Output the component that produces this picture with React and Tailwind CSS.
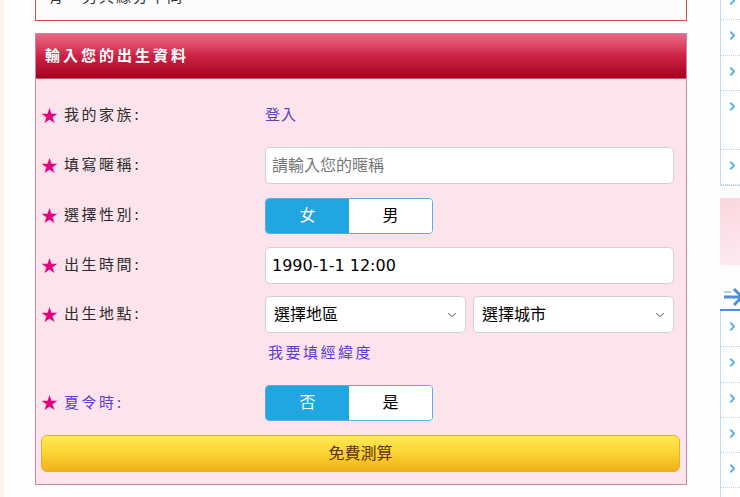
import { ChevronDown, ChevronRight } from 'lucide-react';

const font = { fontFamily: '"DejaVu Sans", "Noto Sans CJK TC", sans-serif' };

function Star() {
  return (
    <span className="-mt-[3px] w-[23px] shrink-0 font-['Noto_Sans_CJK_TC',sans-serif] text-[17px] leading-none text-[#e5007f]">★</span>
  );
}

function Label({ text, purple }) {
  return (
    <div className="flex w-[224px] shrink-0 items-center">
      <Star />
      <span className={`text-[15px] tracking-[2.5px] ${purple ? 'text-[#5a3fcb]' : 'text-[#2b2b2b]'}`}>{text}:</span>
    </div>
  );
}

function Toggle({ left, right }) {
  return (
    <div className="flex h-[36px] w-[168px] overflow-hidden rounded-[4px] border border-[#5aaedf] text-[16px]">
      <div className="flex w-[83px] items-center justify-center bg-[#22a6e2] text-white">{left}</div>
      <div className="flex flex-1 items-center justify-center bg-white text-black">{right}</div>
    </div>
  );
}

function Select({ text }) {
  return (
    <div className="flex h-[37px] flex-1 items-center justify-between rounded-[5px] border border-[#d2d2d2] bg-white pl-[8px] pr-[6px] text-[16px] text-black">
      <span>{text}</span>
      <ChevronDown size={14} strokeWidth={1.5} className="text-[#333]" />
    </div>
  );
}

function SideList({ rows }) {
  return (
    <div className="border-l border-b border-[#c4dcf2] bg-white">
      {rows.map((h, i) => (
        <div key={i} className="flex border-b border-dotted border-[#c9cfd6] pl-[5px] pt-[9px]" style={{ height: h }}>
          <ChevronRight size={13} strokeWidth={3.5} className="text-[#5bb2e8]" />
        </div>
      ))}
    </div>
  );
}

export default function App() {
  return (
    <div className="flex h-[497px] w-[740px] overflow-hidden bg-[#fdfdfd]" style={font}>
      <div className="w-[4px] shrink-0 bg-[#fdf4ec]" />
      <div className="ml-[31px] w-[652px] shrink-0">
        <div className="-mt-[15px] border border-[#c9573c] bg-[#fcfcfd] px-[12px] pb-[12px]">
          <p className="text-[15px] leading-[22px] tracking-[2px] text-[#333]">有，另具緣分不同。</p>
        </div>

        <div className="mt-[12px] border border-[#c58aa3] bg-[#fde4ec]">
          <div className="flex h-[45px] items-center border-b border-[#c45a78] bg-gradient-to-b from-[#ec6585] via-[#cc2146] to-[#a6001e] pl-[9px]">
            <span className="text-[15px] font-bold tracking-[3px] text-white">輸入您的出生資料</span>
          </div>

          <div className="flex flex-col pb-[12px] pl-[5px] pr-[6px]">
            <div className="mt-[18px] flex h-[37px] items-center pr-[6px]">
              <Label text="我的家族" />
              <span className="text-[15px] tracking-[1px] text-[#5a3fcb]">登入</span>
            </div>

            <div className="mt-[13px] flex h-[37px] items-center pr-[6px]">
              <Label text="填寫暱稱" />
              <div className="flex h-[37px] flex-1 items-center rounded-[5px] border border-[#d2d2d2] bg-white pl-[6px] text-[16px] text-[#777]">
                請輸入您的暱稱
              </div>
            </div>

            <div className="mt-[13px] flex h-[37px] items-center pr-[6px]">
              <Label text="選擇性別" />
              <Toggle left="女" right="男" />
            </div>

            <div className="mt-[13px] flex h-[37px] items-center pr-[6px]">
              <Label text="出生時間" />
              <div className="flex h-[37px] flex-1 items-center rounded-[5px] border border-[#d2d2d2] bg-white pl-[6px] text-[16px] text-black">
                1990-1-1 12:00
              </div>
            </div>

            <div className="mt-[12px] flex h-[37px] items-center pr-[6px]">
              <Label text="出生地點" />
              <div className="flex flex-1 gap-[7px]">
                <Select text="選擇地區" />
                <Select text="選擇城市" />
              </div>
            </div>

            <div className="mt-[8px] flex h-[24px] items-center pl-[227px]">
              <span className="text-[15px] tracking-[2.5px] text-[#5a3fcb]">我要填經緯度</span>
            </div>

            <div className="mt-[20px] flex h-[36px] items-center pr-[6px]">
              <Label text="夏令時" purple />
              <Toggle left="否" right="是" />
            </div>

            <div className="mt-[14px] flex h-[37px] items-center justify-center rounded-[6px] border border-[#e5b032] bg-gradient-to-b from-[#ffec52] via-[#fbd233] to-[#efb215] text-[16px] text-[#5c3200]">
              免費測算
            </div>
          </div>
        </div>
      </div>

      <div className="ml-[33px] w-[200px] shrink-0">
        <div className="-mt-[15px]">
          <SideList rows={[35, 36, 35, 59, 35]} />
        </div>
        <div className="mt-[12px] h-[67px] bg-gradient-to-br from-[#fbd6e0] via-[#fde8ef] to-[#f6c4d3]" />
        <div className="mt-[16px] flex h-[30px] items-end border-b-2 border-[#4a8fd8] pl-[2px]">
          <svg width="24" height="22" viewBox="0 0 24 22" className="mb-[1px]">
            <path d="M2 11h18M12 3l8 8-8 8" fill="none" stroke="#4a8fd8" strokeWidth="3" />
            <path d="M2 6h7" fill="none" stroke="#a8cdf2" strokeWidth="2" />
          </svg>
        </div>
        <SideList rows={[36, 36, 35, 35, 35, 35]} />
      </div>
    </div>
  );
}
